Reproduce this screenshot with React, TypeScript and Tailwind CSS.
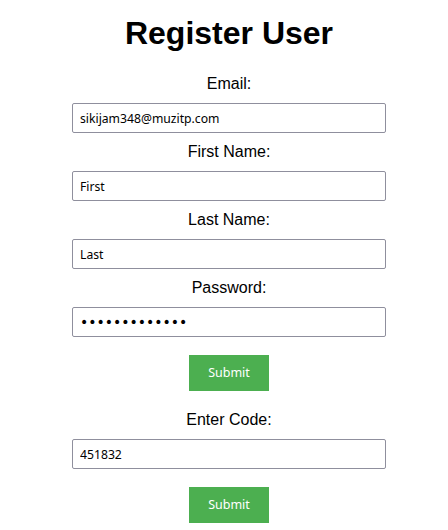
import React, { useState } from 'react';

const inputFont = { fontFamily: '"Noto Sans", "DejaVu Sans", sans-serif' };
const dotsFont = { fontFamily: '"DejaVu Sans", sans-serif' };

function Field({
  label,
  value,
  onChange,
  type = 'text',
}: {
  label: string;
  value: string;
  onChange: (v: string) => void;
  type?: string;
}) {
  const isPassword = type === 'password';
  return (
    <div className="flex flex-col items-center w-full">
      <label className="text-[16px] leading-[18px] text-black">{label}</label>
      <input
        type={type}
        value={value}
        onChange={(e) => onChange(e.target.value)}
        style={isPassword ? dotsFont : inputFont}
        className={
          isPassword
            ? 'mt-[10px] mb-[10px] w-[314px] h-[30px] px-[7px] border border-[#8f8f9d] rounded-[2px] text-[14px] text-black bg-white outline-none'
            : 'mt-[10px] mb-[10px] w-[314px] h-[30px] px-[7px] border border-[#8f8f9d] rounded-[2px] text-[12.2px] text-black bg-white outline-none'
        }
      />
    </div>
  );
}

function SubmitButton() {
  return (
    <button
      style={inputFont}
      className="w-[80px] h-[36px] bg-[#4caf50] text-white text-[12.5px]"
    >
      Submit
    </button>
  );
}

export default function App() {
  const [email, setEmail] = useState('sikijam348@muzitp.com');
  const [first, setFirst] = useState('First');
  const [last, setLast] = useState('Last');
  const [password, setPassword] = useState('abcdefghijklm');
  const [code, setCode] = useState('451832');

  return (
    <div
      className="w-[448px] h-[530px] bg-white pl-[10px] pt-[15px] flex flex-col items-center"
      style={{ fontFamily: '"Liberation Sans", Arial, sans-serif' }}
    >
      <h1 className="text-[32px] font-bold leading-[37px] text-black mb-[23px]">
        Register User
      </h1>
      <Field label="Email:" value={email} onChange={setEmail} />
      <Field label="First Name:" value={first} onChange={setFirst} />
      <Field label="Last Name:" value={last} onChange={setLast} />
      <Field label="Password:" value={password} onChange={setPassword} type="password" />
      <div className="mt-[8px] mb-[20px]">
        <SubmitButton />
      </div>
      <Field label="Enter Code:" value={code} onChange={setCode} />
      <div className="mt-[8px]">
        <SubmitButton />
      </div>
    </div>
  );
}
